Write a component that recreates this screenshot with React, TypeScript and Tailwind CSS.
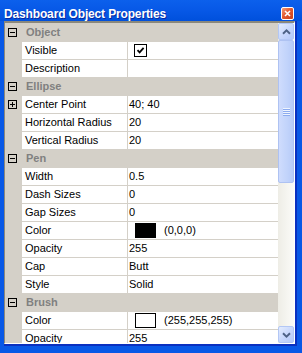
type Row =
  | { kind: 'cat'; label: string }
  | { kind: 'prop'; name: string; value?: string; check?: boolean; swatch?: string; expand?: boolean };

const ROWS: Row[] = [
  { kind: 'cat', label: 'Object' },
  { kind: 'prop', name: 'Visible', check: true },
  { kind: 'prop', name: 'Description', value: '' },
  { kind: 'cat', label: 'Ellipse' },
  { kind: 'prop', name: 'Center Point', value: '40; 40', expand: true },
  { kind: 'prop', name: 'Horizontal Radius', value: '20' },
  { kind: 'prop', name: 'Vertical Radius', value: '20' },
  { kind: 'cat', label: 'Pen' },
  { kind: 'prop', name: 'Width', value: '0.5' },
  { kind: 'prop', name: 'Dash Sizes', value: '0' },
  { kind: 'prop', name: 'Gap Sizes', value: '0' },
  { kind: 'prop', name: 'Color', value: '(0,0,0)', swatch: '#000000' },
  { kind: 'prop', name: 'Opacity', value: '255' },
  { kind: 'prop', name: 'Cap', value: 'Butt' },
  { kind: 'prop', name: 'Style', value: 'Solid' },
  { kind: 'cat', label: 'Brush' },
  { kind: 'prop', name: 'Color', value: '(255,255,255)', swatch: '#ffffff' },
  { kind: 'prop', name: 'Opacity', value: '255' },
];

function ToggleBox({ open }: { open: boolean }) {
  return (
    <svg width="9" height="9" viewBox="0 0 9 9" className="block" shapeRendering="crispEdges">
      <rect x="0.5" y="0.5" width="8" height="8" fill="none" stroke="#000" />
      <line x1="2" y1="4.5" x2="7" y2="4.5" stroke="#000" />
      {!open && <line x1="4.5" y1="2" x2="4.5" y2="7" stroke="#000" />}
    </svg>
  );
}

function CheckBox() {
  return (
    <div className="w-[13px] h-[13px] border border-black bg-white flex items-center justify-center">
      <svg width="9" height="9" viewBox="0 0 9 9" className="block">
        <path d="M1.5 4.2 L3.6 6.4 L7.6 1.8" fill="none" stroke="#000" strokeWidth="1.8" />
      </svg>
    </div>
  );
}

function CategoryRow({ label }: { label: string }) {
  return (
    <div className="h-[18px] shrink-0 flex border-t border-[#d4d0c8] bg-[#d4d0c8]">
      <div className="w-[17px] shrink-0 pl-[3px] pt-[4px]">
        <ToggleBox open />
      </div>
      <span className="pl-[4px] font-bold text-[#808080] leading-[17px]">{label}</span>
    </div>
  );
}

function PropRow({ row }: { row: Extract<Row, { kind: 'prop' }> }) {
  return (
    <div className="h-[18px] shrink-0 flex border-t border-[#d4d0c8]">
      <div className="w-[17px] shrink-0 bg-[#d4d0c8] pl-[3px] pt-[4px]">
        {row.expand && <ToggleBox open={false} />}
      </div>
      <div className="w-[106px] shrink-0 border-r border-[#d4d0c8] bg-white pl-[3px] leading-[17px] whitespace-nowrap overflow-hidden">
        {row.name}
      </div>
      <div className="flex-1 min-w-0 bg-white flex items-center whitespace-nowrap overflow-hidden">
        {row.check && (
          <div className="pl-[6px]">
            <CheckBox />
          </div>
        )}
        {row.swatch && (
          <>
            <div
              className="ml-[7px] w-[21px] h-[15px] shrink-0 border border-black"
              style={{ backgroundColor: row.swatch }}
            />
            <span className="ml-[8px] leading-[17px]">{row.value}</span>
          </>
        )}
        {!row.check && !row.swatch && <span className="pl-[1px] leading-[17px]">{row.value}</span>}
      </div>
    </div>
  );
}

function Chevron({ down }: { down?: boolean }) {
  return (
    <svg width="9" height="6" viewBox="0 0 9 6" className="block">
      <path
        d={down ? 'M1 1.2 L4.5 4.6 L8 1.2' : 'M1 4.8 L4.5 1.4 L8 4.8'}
        fill="none"
        stroke="#4d6185"
        strokeWidth="1.9"
      />
    </svg>
  );
}

function ScrollButton({ down }: { down?: boolean }) {
  return (
    <div className="h-[17px] shrink-0 rounded-[2px] border border-[#b3c7f5] bg-[linear-gradient(135deg,#e3ecfe,#c6d6fc_55%,#b5c9f8)] flex items-center justify-center">
      <Chevron down={down} />
    </div>
  );
}

function Scrollbar() {
  return (
    <div className="w-[16px] shrink-0 flex flex-col bg-[linear-gradient(to_right,#eeede6,#fbfbf8)]">
      <ScrollButton />
      <div className="h-[143px] shrink-0 rounded-[2px] border border-[#aec2f2] bg-[linear-gradient(to_right,#cfdcfd,#c1d3fb_60%,#b7cbf8)] flex items-center justify-center">
        <div className="w-[7px] flex flex-col">
          <div className="h-px bg-[#eef4fe]" />
          <div className="h-px bg-[#8cabef]" />
          <div className="h-px bg-[#eef4fe]" />
          <div className="h-px bg-[#8cabef]" />
          <div className="h-px bg-[#eef4fe]" />
          <div className="h-px bg-[#8cabef]" />
          <div className="h-px bg-[#eef4fe]" />
          <div className="h-px bg-[#8cabef]" />
        </div>
      </div>
      <div className="flex-1" />
      <ScrollButton down />
    </div>
  );
}

export default function App() {
  return (
    <div className="w-[302px] h-[353px] overflow-hidden flex flex-col bg-[#0858e6] font-['Liberation_Sans',Arial,sans-serif] text-[11px] text-black select-none">
      {/* caption */}
      <div className="h-[21px] shrink-0 flex items-end justify-between pl-[4px] pr-[8px] pb-[1px] bg-[linear-gradient(to_bottom,#0c60ec,#0758e6_50%,#0050dc)]">
        <span className="text-white font-bold text-[12px] leading-[12px] tracking-[-0.15px] [text-shadow:1px_1px_0_#0a2aa0]">
          Dashboard Object Properties
        </span>
        <div className="w-[13px] h-[13px] rounded-[2px] border border-white bg-[linear-gradient(135deg,#f2a07c,#e35a2f_45%,#c9401b)] flex items-center justify-center">
          <svg width="7" height="7" viewBox="0 0 7 7" className="block">
            <path d="M1 1 L6 6 M6 1 L1 6" stroke="#fff" strokeWidth="1.6" />
          </svg>
        </div>
      </div>

      {/* frame */}
      <div className="flex-1 min-h-0 flex pl-[4px] pr-[5px] pb-[7px]">
        <div className="flex-1 min-w-0 flex border-r-2 border-b-2 border-[#0a30c0]">
          <div className="flex-1 min-w-0 flex border-t-2 border-l border-t-[#8a887c] border-l-[#8a887c] border-r border-b border-r-white border-b-white bg-white overflow-hidden">
            <div className="flex-1 min-w-0 flex flex-col overflow-hidden">
              {ROWS.map((row, i) =>
                row.kind === 'cat' ? <CategoryRow key={i} label={row.label} /> : <PropRow key={i} row={row} />
              )}
            </div>
            <Scrollbar />
          </div>
        </div>
      </div>
    </div>
  );
}
